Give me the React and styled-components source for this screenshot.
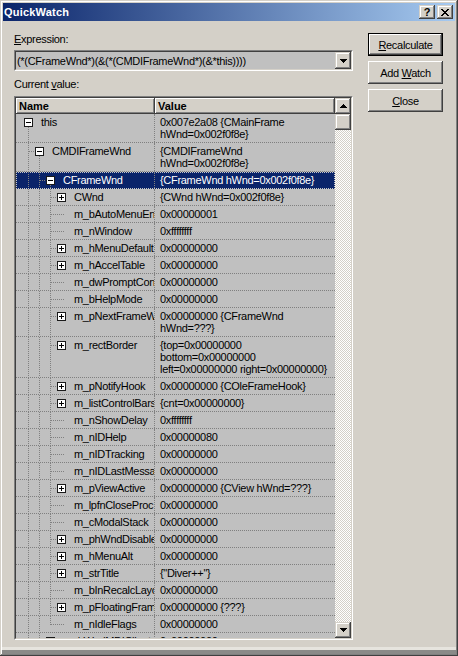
import React from 'react';
import styled, { createGlobalStyle, css } from 'styled-components';

const GlobalStyle = createGlobalStyle`
  html, body {
    margin: 0;
    padding: 0;
    background: #d4d0c8;
  }
`;

// win2k 3d edges
const raised = css`
  background: #d4d0c8;
  box-shadow: inset -1px -1px #404040, inset 1px 1px #fff, inset -2px -2px #808080, inset 2px 2px #d4d0c8;
`;

const raisedSmall = css`
  background: #d4d0c8;
  box-shadow: inset -1px -1px #404040, inset 1px 1px #d4d0c8, inset -2px -2px #808080, inset 2px 2px #fff;
`;

const Window = styled.div`
  width: 458px;
  height: 656px;
  box-sizing: border-box;
  padding: 3px;
  background: #d4d0c8;
  box-shadow: inset -1px -1px #404040, inset 1px 1px #d4d0c8, inset -2px -2px #808080, inset 2px 2px #fff,
    inset 0 -6px #8a8a88, inset 0 -9px #e6e4de;
  display: flex;
  flex-direction: column;
  overflow: hidden;
  font-family: "Liberation Sans", Arial, sans-serif;
  font-size: 11px;
  letter-spacing: -0.3px;
  color: #000;
`;

const TitleBar = styled.div`
  height: 18px;
  flex: none;
  display: flex;
  align-items: center;
  padding: 0 2px 0 1px;
  background: linear-gradient(to right, #0a246a, #a6caf0);
`;

const TitleText = styled.span`
  flex: 1;
  color: #fff;
  font-weight: bold;
  letter-spacing: 0.2px;
`;

const CaptionButton = styled.div`
  ${raisedSmall};
  width: 16px;
  height: 14px;
  margin-left: 2px;
  display: flex;
  align-items: center;
  justify-content: center;
  font-weight: bold;
  font-size: 11px;
  letter-spacing: 0;
  line-height: 14px;
`;

const Body = styled.div`
  flex: 1;
  min-height: 0;
  display: flex;
  gap: 15px;
  padding: 12px 0 0 11px;
`;

const LeftColumn = styled.div`
  width: 339px;
  display: flex;
  flex-direction: column;
`;

const RightColumn = styled.div`
  display: flex;
  flex-direction: column;
  gap: 5px;
`;

const Label = styled.div`
  height: 13px;
  line-height: 13px;
  margin-top: ${p => p.$gap || 0}px;
  white-space: nowrap;
`;

const SunkenOuter = styled.div`
  box-sizing: border-box;
  border: 1px solid;
  border-color: #808080 #fff #fff #808080;
  margin-top: ${p => p.$gap}px;
  height: ${p => p.$h}px;
`;

const SunkenInner = styled.div`
  box-sizing: border-box;
  height: 100%;
  border: 1px solid;
  border-color: #404040 #d4d0c8 #d4d0c8 #404040;
  background: #c0c0c0;
  display: flex;
  align-items: ${p => p.$center ? 'center' : 'stretch'};
`;

const ComboText = styled.span`
  flex: 1;
  padding-left: 1px;
  white-space: nowrap;
  overflow: hidden;
`;

const ArrowButton = styled.div`
  ${raisedSmall};
  width: 16px;
  height: ${p => p.$h || 16}px;
  flex: none;
  display: flex;
  align-items: center;
  justify-content: center;
`;

const Pane = styled.div`
  flex: 1;
  min-width: 0;
  overflow: hidden;
`;

const HeaderRow = styled.div`
  display: flex;
  height: 16px;
`;

const HeaderCell = styled.div`
  ${raised};
  width: ${p => p.$w ? `${p.$w}px` : 'auto'};
  flex: ${p => p.$w ? 'none' : 1};
  box-sizing: border-box;
  padding-left: 3px;
  line-height: 16px;
  font-weight: bold;
  letter-spacing: 0;
`;

const Row = styled.div`
  display: flex;
  line-height: 12px;
  border-bottom: 1px dotted #808080;
  background: ${p => p.$selected ? '#0a246a' : '#c0c0c0'};
  color: ${p => p.$selected ? '#fff' : '#000'};
  outline: ${p => p.$selected ? '1px dotted #c8c8c8' : 'none'};
  outline-offset: -1px;
`;

const NameCell = styled.div`
  position: relative;
  width: 139px;
  flex: none;
  box-sizing: border-box;
  border-right: 1px dotted #808080;
  padding: 2px 0 2px ${p => 25 + p.$level * 11}px;
  white-space: nowrap;
  overflow: hidden;
`;

const ValueCell = styled.div`
  flex: 1;
  min-width: 0;
  padding: 2px 0 2px 5px;
  white-space: nowrap;
  overflow: hidden;
`;

const Guides = styled.svg`
  position: absolute;
  left: 0;
  top: 0;
  width: 80px;
  height: 100%;
  pointer-events: none;
`;

const ScrollBar = styled.div`
  width: 16px;
  flex: none;
  display: flex;
  flex-direction: column;
`;

const Track = styled.div`
  flex: 1;
  background-color: #fff;
  background-image: repeating-conic-gradient(#d4d0c8 0 25%, #fff 0 50%);
  background-size: 2px 2px;
`;

const PushButton = styled.div`
  width: 75px;
  height: 23px;
  box-sizing: border-box;
  display: flex;
  align-items: center;
  justify-content: center;
  background: #d4d0c8;
  box-shadow: ${p => p.$default
    ? 'inset 0 0 0 1px #000, inset -2px -2px #404040, inset 2px 2px #fff, inset -3px -3px #808080'
    : 'inset -1px -1px #404040, inset 1px 1px #fff, inset -2px -2px #808080'};
`;

const rows = [
  { name: 'this', level: 0, kind: 'open', value: ['0x007e2a08 {CMainFrame', 'hWnd=0x002f0f8e}'] },
  { name: 'CMDIFrameWnd', level: 1, kind: 'open', value: ['{CMDIFrameWnd', 'hWnd=0x002f0f8e}'] },
  { name: 'CFrameWnd', level: 2, kind: 'open', value: ['{CFrameWnd hWnd=0x002f0f8e}'], selected: true },
  { name: 'CWnd', level: 3, kind: 'closed', value: ['{CWnd hWnd=0x002f0f8e}'] },
  { name: 'm_bAutoMenuEnable', level: 3, kind: 'leaf', value: ['0x00000001'] },
  { name: 'm_nWindow', level: 3, kind: 'leaf', value: ['0xffffffff'] },
  { name: 'm_hMenuDefault', level: 3, kind: 'closed', value: ['0x00000000'] },
  { name: 'm_hAccelTable', level: 3, kind: 'closed', value: ['0x00000000'] },
  { name: 'm_dwPromptContext', level: 3, kind: 'leaf', value: ['0x00000000'] },
  { name: 'm_bHelpMode', level: 3, kind: 'leaf', value: ['0x00000000'] },
  { name: 'm_pNextFrameWnd', level: 3, kind: 'closed', value: ['0x00000000 {CFrameWnd', 'hWnd=???}'] },
  { name: 'm_rectBorder', level: 3, kind: 'closed', value: ['{top=0x00000000', 'bottom=0x00000000', 'left=0x00000000 right=0x00000000}'] },
  { name: 'm_pNotifyHook', level: 3, kind: 'closed', value: ['0x00000000 {COleFrameHook}'] },
  { name: 'm_listControlBars', level: 3, kind: 'closed', value: ['{cnt=0x00000000}'] },
  { name: 'm_nShowDelay', level: 3, kind: 'leaf', value: ['0xffffffff'] },
  { name: 'm_nIDHelp', level: 3, kind: 'leaf', value: ['0x00000080'] },
  { name: 'm_nIDTracking', level: 3, kind: 'leaf', value: ['0x00000000'] },
  { name: 'm_nIDLastMessage', level: 3, kind: 'leaf', value: ['0x00000000'] },
  { name: 'm_pViewActive', level: 3, kind: 'closed', value: ['0x00000000 {CView hWnd=???}'] },
  { name: 'm_lpfnCloseProc', level: 3, kind: 'leaf', value: ['0x00000000'] },
  { name: 'm_cModalStack', level: 3, kind: 'leaf', value: ['0x00000000'] },
  { name: 'm_phWndDisable', level: 3, kind: 'closed', value: ['0x00000000'] },
  { name: 'm_hMenuAlt', level: 3, kind: 'closed', value: ['0x00000000'] },
  { name: 'm_strTitle', level: 3, kind: 'closed', value: ['{"Diver++"}'] },
  { name: 'm_bInRecalcLayout', level: 3, kind: 'leaf', value: ['0x00000000'] },
  { name: 'm_pFloatingFrameWnd', level: 3, kind: 'closed', value: ['0x00000000 {???}'] },
  { name: 'm_nIdleFlags', level: 3, kind: 'leaf', value: ['0x00000000'], last: true },
  { name: 'm_hWndMDIClient', level: 2, kind: 'closed', value: ['0x00000000'] },
];

const col = k => 12 + k * 11;
const MID = 8.5;

const TreeGuides = ({ level, kind, last }) => {
  const dots = { stroke: '#808080', strokeDasharray: '1 1', shapeRendering: 'crispEdges' };
  const c = col(level);
  const lines = [];
  for (let k = 0; k < level - 1; k++) {
    lines.push(<line key={`a${k}`} x1={col(k) + 0.5} x2={col(k) + 0.5} y1="0" y2="100%" {...dots} />);
  }
  if (level > 0) {
    const p = col(level - 1) + 0.5;
    lines.push(<line key="p" x1={p} x2={p} y1="0" y2={last ? MID : '100%'} {...dots} />);
    lines.push(<line key="h" x1={p} x2={kind === 'leaf' ? c + 3 : c - 4} y1={MID} y2={MID} {...dots} />);
  }
  if (kind === 'open') {
    lines.push(<line key="o" x1={c + 0.5} x2={c + 0.5} y1="13" y2="100%" {...dots} />);
  }
  return (
    <Guides>
      {lines}
      {kind !== 'leaf' && (
        <g shapeRendering="crispEdges">
          <rect x={c - 3.5} y={4.5} width="8" height="8" fill="#fff" stroke="#1a1a1a" />
          <line x1={c - 2} x2={c + 3} y1={MID} y2={MID} stroke="#000" />
          {kind === 'closed' && <line x1={c + 0.5} x2={c + 0.5} y1="6" y2="11" stroke="#000" />}
        </g>
      )}
    </Guides>
  );
};

const Arrow = ({ up }) => (
  <svg width="7" height="4" viewBox="0 0 7 4" shapeRendering="crispEdges">
    <path
      d={up
        ? 'M3 0h1v1H3z M2 1h3v1H2z M1 2h5v1H1z M0 3h7v1H0z'
        : 'M0 0h7v1H0z M1 1h5v1H1z M2 2h3v1H2z M3 3h1v1H3z'}
      fill="#000"
    />
  </svg>
);

const CloseGlyph = () => (
  <svg width="8" height="7" viewBox="0 0 8 7" shapeRendering="crispEdges">
    <path
      d="M0 0h2v1H0z M6 0h2v1H6z M1 1h2v1H1z M5 1h2v1H5z M2 2h4v1H2z M3 3h2v1H3z M2 4h4v1H2z M1 5h2v1H1z M5 5h2v1H5z M0 6h2v1H0z M6 6h2v1H6z"
      fill="#000"
    />
  </svg>
);

const App = () => (
  <>
    <GlobalStyle />
    <Window>
      <TitleBar>
        <TitleText>QuickWatch</TitleText>
        <CaptionButton>?</CaptionButton>
        <CaptionButton><CloseGlyph /></CaptionButton>
      </TitleBar>
      <Body>
        <LeftColumn>
          <Label><u>E</u>xpression:</Label>
          <SunkenOuter $gap={4} $h={21}>
            <SunkenInner $center>
              <ComboText>(*(CFrameWnd*)(&amp;(*(CMDIFrameWnd*)(&amp;*this))))</ComboText>
              <ArrowButton $h={17}><Arrow /></ArrowButton>
            </SunkenInner>
          </SunkenOuter>
          <Label $gap={7}>Current <u>v</u>alue:</Label>
          <SunkenOuter $gap={5} $h={544}>
            <SunkenInner>
              <Pane>
                <HeaderRow>
                  <HeaderCell $w={139}>Name</HeaderCell>
                  <HeaderCell>Value</HeaderCell>
                </HeaderRow>
                {rows.map(r => (
                  <Row key={r.name} $selected={r.selected}>
                    <NameCell $level={r.level}>
                      <TreeGuides level={r.level} kind={r.kind} last={r.last} />
                      {r.name}
                    </NameCell>
                    <ValueCell>
                      {r.value.map(line => <div key={line}>{line}</div>)}
                    </ValueCell>
                  </Row>
                ))}
              </Pane>
              <ScrollBar>
                <ArrowButton><Arrow up /></ArrowButton>
                <ArrowButton />
                <Track />
                <ArrowButton><Arrow /></ArrowButton>
              </ScrollBar>
            </SunkenInner>
          </SunkenOuter>
        </LeftColumn>
        <RightColumn>
          <PushButton $default><span><u>R</u>ecalculate</span></PushButton>
          <PushButton><span>Add <u>W</u>atch</span></PushButton>
          <PushButton><span><u>C</u>lose</span></PushButton>
        </RightColumn>
      </Body>
    </Window>
  </>
);

export default App;
